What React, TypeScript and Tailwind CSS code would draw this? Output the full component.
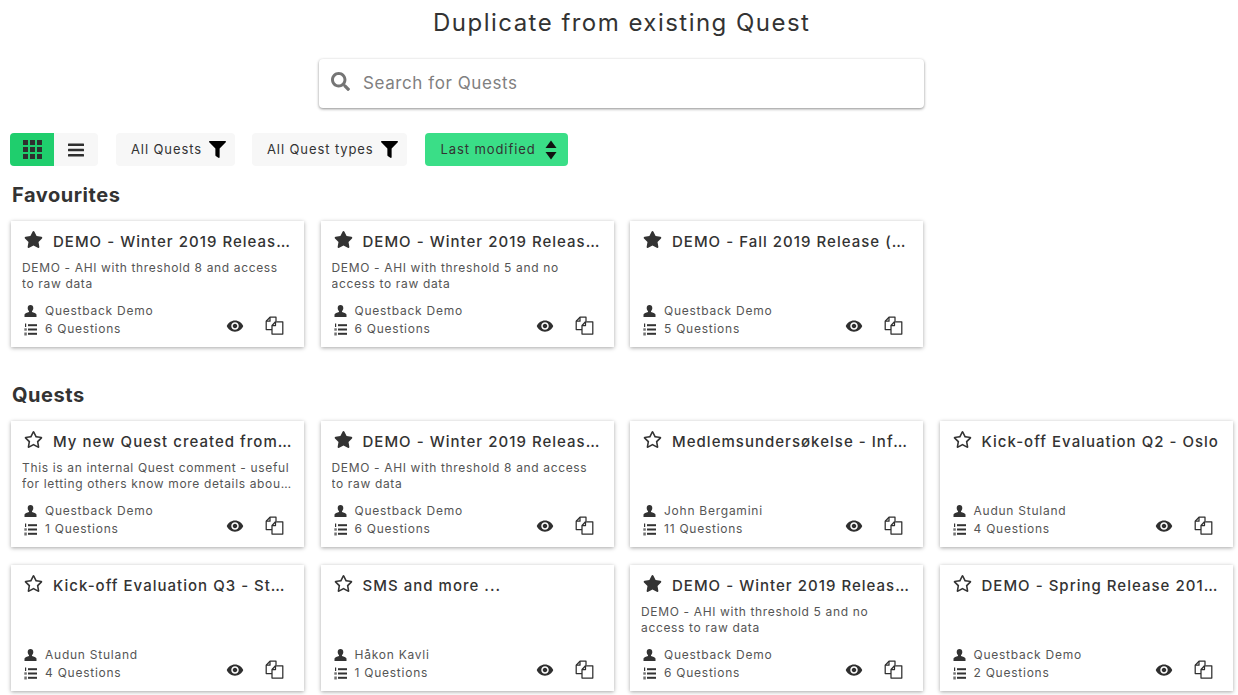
import { FaStar, FaRegStar, FaSearch, FaFilter } from "react-icons/fa";
import { MdVisibility } from "react-icons/md";

type Q = { title: string; desc?: string; owner: string; count: string; fav: boolean };

const favourites: Q[] = [
  { title: "DEMO - Winter 2019 Release (AHI 8)", desc: "DEMO - AHI with threshold 8 and access to raw data", owner: "Questback Demo", count: "6 Questions", fav: true },
  { title: "DEMO - Winter 2019 Release (AHI 5)", desc: "DEMO - AHI with threshold 5 and no access to raw data", owner: "Questback Demo", count: "6 Questions", fav: true },
  { title: "DEMO - Fall 2019 Release (Employee)", owner: "Questback Demo", count: "5 Questions", fav: true },
];

const quests: Q[] = [
  { title: "My new Quest created from a template", desc: "This is an internal Quest comment - useful for letting others know more details about the purpose", owner: "Questback Demo", count: "1 Questions", fav: false },
  { title: "DEMO - Winter 2019 Release (AHI 8)", desc: "DEMO - AHI with threshold 8 and access to raw data", owner: "Questback Demo", count: "6 Questions", fav: true },
  { title: "Medlemsundersøkelse - Informasjon", owner: "John Bergamini", count: "11 Questions", fav: false },
  { title: "Kick-off Evaluation Q2 - Oslo", owner: "Audun Stuland", count: "4 Questions", fav: false },
  { title: "Kick-off Evaluation Q3 - Stockholm", owner: "Audun Stuland", count: "4 Questions", fav: false },
  { title: "SMS and more ...", owner: "Håkon Kavli", count: "1 Questions", fav: false },
  { title: "DEMO - Winter 2019 Release (AHI 5)", desc: "DEMO - AHI with threshold 5 and no access to raw data", owner: "Questback Demo", count: "6 Questions", fav: true },
  { title: "DEMO - Spring Release 2019 Demo", owner: "Questback Demo", count: "2 Questions", fav: false },
];

function CopyIcon() {
  return (
    <svg width="19" height="19" viewBox="0 0 19 19" fill="none" stroke="#2f2f2f" strokeWidth="1.25" strokeLinejoin="round">
      <path d="M7 13.5H1.2V5.2L5 1.2h6v4" />
      <path d="M5 1.2v4H1.2" />
      <path d="M7 18V9.5L10.5 5.8H17.8V18Z" fill="#fff" />
      <path d="M10.5 5.8v3.7H7" />
    </svg>
  );
}

function UserIcon() {
  return (
    <svg width="13" height="12" viewBox="0 0 13 12" fill="#333" className="shrink-0">
      <path d="M6.5 0C4.7 0 3.7 1.2 3.7 3c0 1.3.5 2.500 1.300 3.200v.8C3.200 7.700.8 8.400.5 9.500V12h12V9.500C12.200 8.400 9.800 7.700 8 7v-.8c.8-.7 1.300-1.900 1.300-3.200C9.300 1.200 8.300 0 6.500 0Z" />
    </svg>
  );
}

function ListIcon() {
  return (
    <svg width="13" height="13" viewBox="0 0 13 13" fill="#333" className="shrink-0">
      <rect x="4" y="1.200" width="9" height="2" />
      <rect x="4" y="5.500" width="9" height="2" />
      <rect x="4" y="9.800" width="9" height="2" />
      <rect x="1" y="0.500" width="1.200" height="3.500" />
      <rect x="0.300" y="5.300" width="2.500" height="2.400" opacity="0.7" />
      <rect x="0.300" y="9.500" width="2.500" height="3" opacity="0.7" />
    </svg>
  );
}

function Card({ q }: { q: Q }) {
  const Star = q.fav ? FaStar : FaRegStar;
  return (
    <div className="h-[126px] bg-white shadow-[0_1px_4px_rgba(0,0,0,0.35)] pl-[13px] pr-[11px] pt-[9px] flex flex-col">
      <div className="flex items-center h-[21px] gap-[10px]">
        <Star className="w-[19px] h-[19px] shrink-0 text-[#333] mb-[2px]" />
        <div className="truncate text-[15px] leading-[21px] pt-[1px] font-medium text-[#333] tracking-[1.02px] min-w-0">{q.title}</div>
      </div>
      <div className="mt-[9px] ml-[-2px] h-[32px] text-[12px] leading-[15.5px] text-[#555] tracking-[0.65px] line-clamp-2">{q.desc}</div>
      <div className="mt-auto mb-[9px] flex items-end justify-between pr-[9px] text-[12px] leading-[18px] text-[#555] tracking-[0.75px]">
        <div>
          <div className="flex items-center gap-[8px]">
            <UserIcon />
            <span>{q.owner}</span>
          </div>
          <div className="flex items-center gap-[8px]">
            <ListIcon />
            <span>{q.count}</span>
          </div>
        </div>
        <div className="flex items-center gap-[21px] mb-[3px]">
          <MdVisibility className="w-[18px] h-[18px] text-[#2f2f2f]" />
          <CopyIcon />
        </div>
      </div>
    </div>
  );
}

function Filter({ label }: { label: string }) {
  return (
    <div className="h-[33px] rounded-[4px] bg-[#f7f7f7] pl-[15px] pr-[9px] flex items-center gap-[7px] text-[13px] text-[#333] tracking-[0.9px]">
      <span>{label}</span>
      <FaFilter className="w-[17px] h-[17px] text-black" />
    </div>
  );
}

export default function App() {
  return (
    <div className="w-[1238px] h-[695px] overflow-hidden bg-white pl-[11px] pr-[5.5px] font-['Inter','Liberation_Sans',sans-serif]">
      <h1 className="h-[45px] pt-[5px] text-center text-[24px] leading-[36px] text-[#333] tracking-[1.47px]">Duplicate from existing Quest</h1>
      <div className="mt-[14px] ml-[308px] w-[605px] h-[49px] rounded-[4px] bg-white shadow-[0_1px_3px_rgba(0,0,0,0.45)] flex items-center pl-[12px] text-[17px] text-[#808080] tracking-[0.58px]">
        <FaSearch className="w-[19px] h-[19px] text-[#757575] mb-[4px]" />
        <span className="ml-[13px]">Search for Quests</span>
      </div>

      <div className="mt-[25px] flex items-center h-[33px] ml-[-1px]">
        <div className="flex h-[33px] rounded-[4px] overflow-hidden w-[88px]">
          <div className="w-[44px] bg-[#1fce6d] flex items-center justify-center">
            <svg width="19" height="19" viewBox="0 0 19 19" fill="#2f2f2f">
              <rect x="0" y="0" width="5" height="5" /><rect x="7" y="0" width="5" height="5" /><rect x="14" y="0" width="5" height="5" />
              <rect x="0" y="7" width="5" height="5" /><rect x="7" y="7" width="5" height="5" /><rect x="14" y="7" width="5" height="5" />
              <rect x="0" y="14" width="5" height="5" /><rect x="7" y="14" width="5" height="5" /><rect x="14" y="14" width="5" height="5" />
            </svg>
          </div>
          <div className="w-[44px] bg-[#f7f7f7] flex items-center justify-center">
            <svg width="16" height="14" viewBox="0 0 16 14" fill="#2f2f2f"><rect y="0.5" width="16" height="2.6" rx="0.5" /><rect y="5.7" width="16" height="2.6" rx="0.5" /><rect y="10.9" width="16" height="2.6" rx="0.5" /></svg>
          </div>
        </div>
        <div className="ml-[18px]"><Filter label="All Quests" /></div>
        <div className="ml-[17px]"><Filter label="All Quest types" /></div>
        <div className="ml-[18px] h-[33px] w-[143px] rounded-[4px] bg-[#3ade87] pl-[16px] flex items-center gap-[9px] text-[13px] text-[#333] tracking-[0.9px]">
          <span>Last modified</span>
          <svg width="12" height="20" viewBox="0 0 12 20" fill="#111"><path d="M6 0.5 11.500 8H.5Z" /><path d="M6 19.500 11.500 12H.5Z" /></svg>
        </div>
      </div>

      <h2 className="mt-[17px] ml-[1px] h-[24px] text-[20px] leading-[24px] font-bold text-[#333] tracking-[0.55px]">Favourites</h2>
      <div className="mt-[14px] grid grid-cols-[repeat(4,293px)] gap-x-[16.5px] gap-y-[18px]">
        {favourites.map((q, i) => <Card key={i} q={q} />)}
      </div>

      <h2 className="mt-[36px] ml-[1px] h-[24px] text-[20px] leading-[24px] font-bold text-[#333] tracking-[0.55px]">Quests</h2>
      <div className="mt-[14px] grid grid-cols-[repeat(4,293px)] gap-x-[16.5px] gap-y-[18px]">
        {quests.map((q, i) => <Card key={i} q={q} />)}
      </div>
    </div>
  );
}
